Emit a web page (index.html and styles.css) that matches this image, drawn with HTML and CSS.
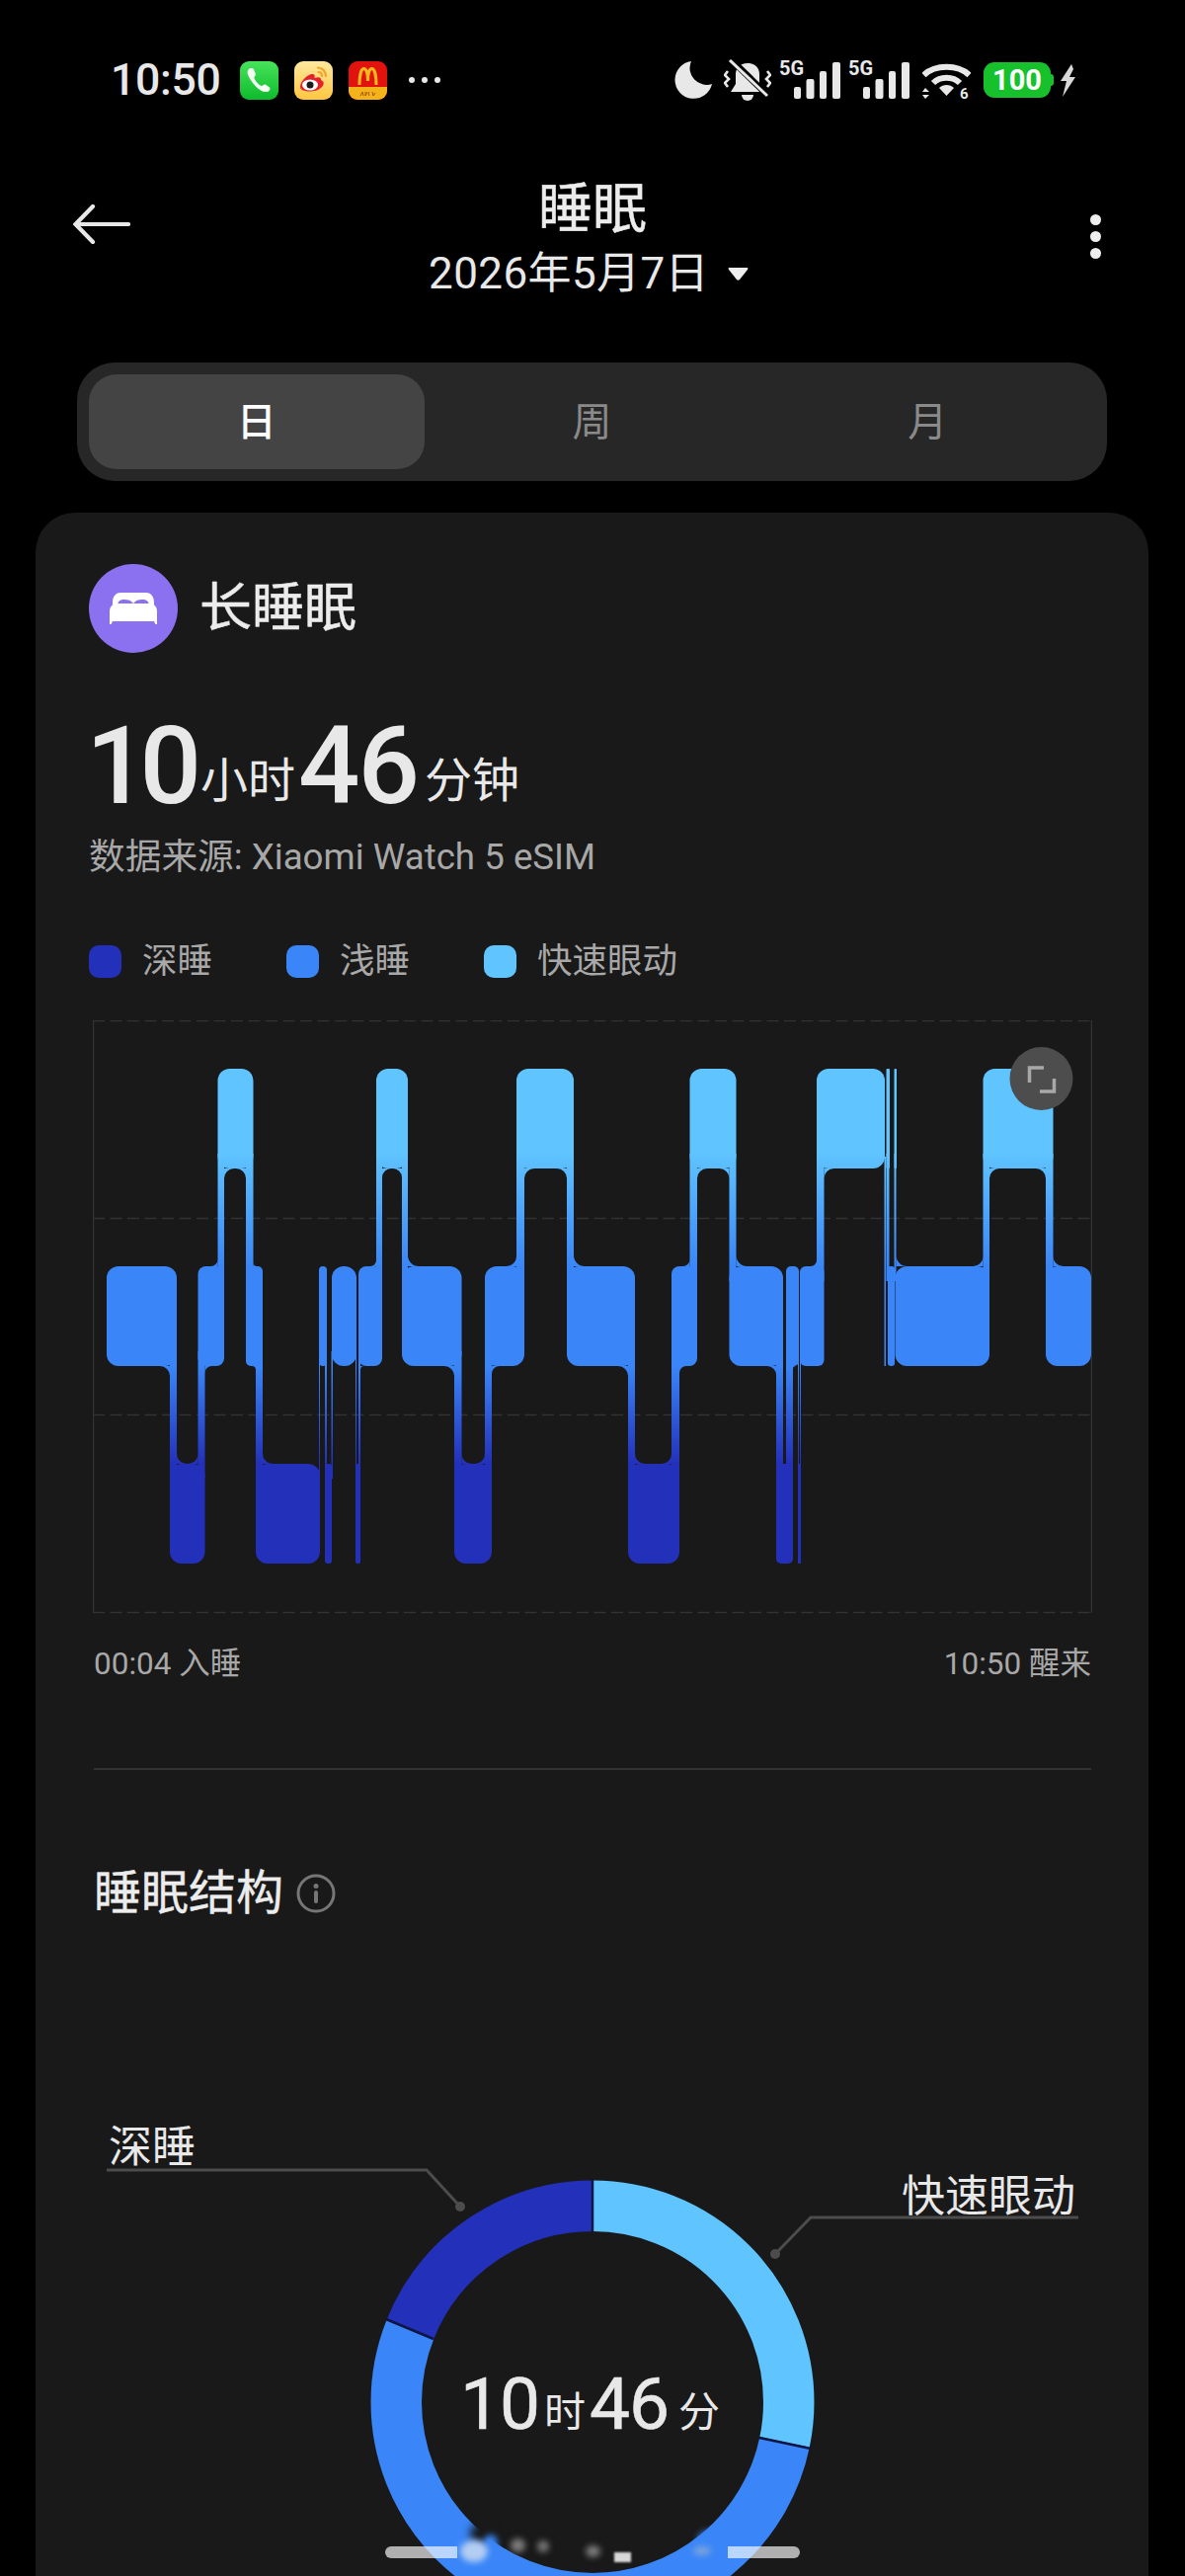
FILE: index.html
```html
<!DOCTYPE html>
<html lang="zh">
<head>
<meta charset="utf-8">
<title>睡眠</title>
<link rel="stylesheet" href="styles.css">
</head>
<body>
<div class="page">
  <div class="status">
    <div class="status-left">
      <span class="clock">10:50</span>
      <svg class="app" viewBox="0 0 39 39"><defs><linearGradient id="pg" x1="0" y1="0" x2="0" y2="1"><stop offset="0" stop-color="#47e35a"/><stop offset="1" stop-color="#0dbb2b"/></linearGradient></defs><rect width="39" height="39" rx="9" fill="url(#pg)"/><path d="M8.500 8.500c1.800-1.800 4.600-2 5.500-.2l1.700 4.200c.5 1.300-.3 2.300-1.500 3.700 1 3.600 4.500 7.500 8 9 1.400-1.300 2.600-2.200 3.900-1.500l3.600 2.500c1.500 1.100.9 3.300-.9 4.300-2.500 1.400-6.500.3-11-3.300C13 22.600 9.500 17.500 8 13.500c-.6-1.800-.5-3.900.5-5z" fill="#f4fff4"/></svg>
      <svg class="app" viewBox="0 0 39 39"><defs><linearGradient id="wg" x1="0" y1="0" x2="0" y2="1"><stop offset="0" stop-color="#ffe9a0"/><stop offset="1" stop-color="#ffc63f"/></linearGradient></defs><rect width="39" height="39" rx="9" fill="url(#wg)"/><path d="M6 26c0-6 8-13 12-13 3 0 3 2 2.500 4 4-1.500 7-.5 6.500 2 4 1.500 3 5.500 .5 7.500-3 3-8 4-12 4-5 0-9.500-1.500-9.500-4.500z" fill="#e5212c"/><ellipse cx="16" cy="24" rx="8" ry="5.500" fill="#fff"/><circle cx="16" cy="24" r="3.500" fill="#1b1b1b"/><path d="M24 6.500c4 0 8 3.500 8 8.500M24.500 11c2 0 3.500 1.500 3.500 4" fill="none" stroke="#f0a52a" stroke-width="2.200" stroke-linecap="round"/></svg>
      <svg class="app" viewBox="0 0 39 39"><rect width="39" height="39" rx="9" fill="#e2120f"/><path d="M0 26H39V30a9 9 0 0 1-9 9H9a9 9 0 0 1-9-9z" fill="#f4b31a"/><path d="M11 24C11 14 13 7.500 15.500 7.500S19.500 13 19.500 20C19.500 13 21 7.500 23.500 7.500S28 14 28 24" fill="none" stroke="#f8b81c" stroke-width="3"/><path d="M12 35l2-4 1 4M17 31v4l2-4M21 31c-1 1-1 3 0 4M24 31l1 4 2-3" fill="none" stroke="#a8550d" stroke-width="1"/></svg>
      <div class="more"><i></i><i></i><i></i></div>
    </div>
    <div class="status-right">
      <svg class="moon" viewBox="0 0 38 38"><path d="M17 0A19 19 0 1 0 38 23A17 17 0 0 1 17 0Z" fill="#e8e8e8"/></svg>
      <svg class="bell" viewBox="0 0 48 42"><path d="M24 4c-8 0-12 5-12 11v10l-5 8h34l-5-8v-10c0-6-4-11-12-11z" fill="#e8e8e8"/><path d="M18 36h12a6 6 0 0 1-12 0z" fill="#e8e8e8"/><path d="M7 0L45 37" stroke="#000" stroke-width="6.500"/><path d="M6 1L44 37" stroke="#e8e8e8" stroke-width="3"/><path d="M4 12L1 16L5 20L1 24L4 28M44 12L47 16L43 20L47 24L44 28" fill="none" stroke="#e8e8e8" stroke-width="2.600"/></svg>
      <svg class="signal" viewBox="0 -5 62 47"><text class="five-g" x="0" y="16">5G</text><rect x="15" y="28" width="7" height="12" rx="2"/><rect x="27.500" y="20" width="8" height="20" rx="2"/><rect x="41" y="12" width="7" height="28" rx="2"/><rect x="54" y="3" width="8" height="37" rx="2"/></svg>
      <svg class="signal" viewBox="0 -5 62 47"><text class="five-g" x="0" y="16">5G</text><rect x="15" y="28" width="7" height="12" rx="2"/><rect x="27.500" y="20" width="8" height="20" rx="2"/><rect x="41" y="12" width="7" height="28" rx="2"/><rect x="54" y="3" width="8" height="37" rx="2"/></svg>
      <svg class="wifi" viewBox="0 0 49 43"><path d="M1.500 13C13 2 36 2 47.500 13" fill="none" stroke="#e8e8e8" stroke-width="6"/><path d="M11 21C18 14 31 14 38 21" fill="none" stroke="#e8e8e8" stroke-width="6"/><path d="M17 26C21 22 28 22 32 26L24.500 34z" fill="#e8e8e8"/><path d="M3 26L0 30H7zM3 37L0 33H7z" fill="#e8e8e8"/><text class="wifi-six" x="38" y="37">6</text></svg>
      <div class="battery">100</div>
      <svg class="bolt" viewBox="0 0 17 33"><path d="M12 0L1 17L7 17L3 33L16 13L10 13L14 5Z" fill="#d8d8d8"/></svg>
    </div>
  </div>

  <header class="header">
    <svg class="back" viewBox="0 0 58 40"><path d="M20 2L2.500 20L20 38M3 20H56" fill="none" stroke="#e8e8e8" stroke-width="4.200" stroke-linecap="round"/></svg>
    <div class="heading">
      <h1 class="title">睡眠</h1>
      <div class="date">2026年5月7日<svg class="caret" viewBox="0 0 21 13"><path d="M1.500 0H19.500Q21 0 20 2L12 12Q10.500 13.500 9 12L1 2Q0 0 1.500 0Z" fill="#eee"/></svg></div>
    </div>
    <div class="kebab"><i></i><i></i><i></i></div>
  </header>

  <nav class="tabs">
    <div class="tab tab-active">日</div>
    <div class="tab">周</div>
    <div class="tab">月</div>
  </nav>

  <main class="card">
    <div class="card-head">
      <div class="bed-badge">
        <svg class="bed" viewBox="0 0 48 34"><path d="M3 11C3 4 7 1 11 1H37C41 1 45 4 45 11V13H40C39 9 37 8 33 8C29 8 26 9 24.500 11.500L24 12L23.500 11.500C22 9 19 8 15 8C11 8 9 9 8 13H3Z" fill="#fff"/><path d="M6 12H42C46 13 48 16 48 20V33H46.500L45 30H3L1.500 33H0V20C0 16 2 13 6 12Z" fill="#fff"/></svg>
      </div>
      <div class="card-title">长睡眠</div>
    </div>
    <div class="duration"><span class="big">10</span><span class="unit">小时</span><span class="big big-second">46</span><span class="unit">分钟</span></div>
    <div class="source">数据来源: Xiaomi Watch 5 eSIM</div>
    <div class="legend">
      <div class="legend-item legend-deep"><i></i>深睡</div>
      <div class="legend-item legend-light"><i></i>浅睡</div>
      <div class="legend-item legend-rem"><i></i>快速眼动</div>
    </div>

    <svg class="chart" viewBox="94 1032 1012 601">
      <defs>
        <linearGradient id="stage" gradientUnits="userSpaceOnUse" x1="0" y1="1081" x2="0" y2="1582">
          <stop offset="0" stop-color="#60c4ff"/>
          <stop offset="0.17" stop-color="#60c4ff"/>
          <stop offset="0.4" stop-color="#3a86f8"/>
          <stop offset="0.6" stop-color="#3a86f8"/>
          <stop offset="0.8" stop-color="#2330b9"/>
          <stop offset="1" stop-color="#2330b9"/>
        </linearGradient>
      </defs>
      <g class="grid">
        <path class="grid-dash" d="M94 1032.500H1105M94 1232.500H1105M94 1431.500H1105M94 1631.500H1105"/>
        <path class="grid-side" d="M94.500 1032V1632M1105.500 1032V1632"/>
      </g>
      <g fill="url(#stage)">
        <g>
          <rect x="108" y="1281" width="71" height="101" rx="12"/>
          <rect x="172" y="1481" width="35.500" height="101" rx="12"/>
          <rect x="200.500" y="1281" width="26.500" height="101" rx="8"/>
          <rect x="220.500" y="1081" width="36" height="101" rx="12"/>
          <rect x="249" y="1281" width="17" height="101" rx="5"/>
          <rect x="259" y="1481" width="65" height="101" rx="12"/>
          <rect x="323" y="1281" width="8" height="101" rx="4"/>
          <rect x="329" y="1481" width="7" height="101" rx="3"/>
          <rect x="336" y="1281" width="25" height="101" rx="12"/>
          <rect x="360" y="1481" width="5" height="101" rx="2"/>
          <rect x="363" y="1281" width="24" height="101" rx="8"/>
          <rect x="381" y="1081" width="32" height="101" rx="12"/>
          <rect x="407" y="1281" width="60.500" height="101" rx="12"/>
          <rect x="460" y="1481" width="38" height="101" rx="12"/>
          <rect x="491" y="1281" width="40" height="101" rx="12"/>
          <rect x="523" y="1081" width="58" height="101" rx="12"/>
          <rect x="574" y="1281" width="69" height="101" rx="12"/>
          <rect x="636" y="1481" width="52" height="101" rx="12"/>
          <rect x="680" y="1281" width="26" height="101" rx="8"/>
          <rect x="698.500" y="1081" width="47" height="101" rx="12"/>
          <rect x="738.500" y="1281" width="54.500" height="101" rx="12"/>
          <rect x="786" y="1481" width="17" height="101" rx="5"/>
          <rect x="796" y="1281" width="13" height="101" rx="5"/>
          <rect x="808" y="1481" width="3" height="101" rx="1"/>
          <rect x="810" y="1281" width="24.500" height="101" rx="6"/>
          <rect x="827" y="1081" width="69" height="101" rx="12"/>
          <rect x="895.500" y="1170" width="1.500" height="212"/>
          <rect x="897.500" y="1081" width="3.500" height="101" rx="1"/>
          <rect x="899" y="1281" width="7" height="101" rx="3"/>
          <rect x="905.500" y="1081" width="2.500" height="101" rx="1"/>
          <rect x="906.500" y="1281" width="95.500" height="101" rx="12"/>
          <rect x="995.500" y="1081" width="71" height="101" rx="12"/>
          <rect x="1059" y="1281" width="46" height="101" rx="12"/>
        </g>
        <g>
          <rect x="220.500" y="1167" width="6.500" height="129"/>
          <rect x="249" y="1167" width="7.500" height="129"/>
          <rect x="381" y="1167" width="6" height="129"/>
          <rect x="407" y="1167" width="6" height="129"/>
          <rect x="523" y="1167" width="8" height="129"/>
          <rect x="574" y="1167" width="7" height="129"/>
          <rect x="698.500" y="1167" width="7.500" height="129"/>
          <rect x="738.500" y="1167" width="7" height="129"/>
          <rect x="827" y="1167" width="7.500" height="129"/>
          <rect x="897.500" y="1167" width="3" height="129"/>
          <rect x="905.500" y="1167" width="2" height="129"/>
          <rect x="995.500" y="1167" width="6.500" height="129"/>
          <rect x="1059" y="1167" width="7.500" height="129"/>
          <rect x="172" y="1367" width="7" height="129"/>
          <rect x="200.500" y="1367" width="7" height="129"/>
          <rect x="259" y="1367" width="7" height="129"/>
          <rect x="323" y="1367" width="1" height="129"/>
          <rect x="329" y="1367" width="2" height="129"/>
          <rect x="335.500" y="1367" width="1.500" height="129"/>
          <rect x="360" y="1367" width="1" height="129"/>
          <rect x="363" y="1367" width="2" height="129"/>
          <rect x="460" y="1367" width="7.500" height="129"/>
          <rect x="491" y="1367" width="7" height="129"/>
          <rect x="636" y="1367" width="7" height="129"/>
          <rect x="680" y="1367" width="8" height="129"/>
          <rect x="786" y="1367" width="7" height="129"/>
          <rect x="796" y="1367" width="7" height="129"/>
          <rect x="808" y="1367" width="1" height="129"/>
          <rect x="810" y="1367" width="1" height="129"/>
        </g>
        <path d="M172 1382H162A10 10 0 0 1 172 1392ZM179 1481H189A10 10 0 0 1 179 1471ZM200.500 1481H190.500A10 10 0 0 0 200.500 1471ZM207.500 1382H214.500A7 7 0 0 0 207.500 1389ZM220.500 1281H213.500A7 7 0 0 0 220.500 1274ZM227 1182H237A10 10 0 0 0 227 1192ZM249 1182H239A10 10 0 0 1 249 1192ZM256.500 1281H260.500A4 4 0 0 1 256.500 1277ZM259 1382H255A4 4 0 0 1 259 1386ZM266 1481H276A10 10 0 0 1 266 1471ZM365 1382H369A4 4 0 0 0 365 1386ZM381 1281H375A6 6 0 0 0 381 1275ZM387 1182H396A9 9 0 0 0 387 1191ZM407 1182H398A9 9 0 0 1 407 1191ZM413 1281H424A11 11 0 0 1 413 1270ZM460 1382H450A10 10 0 0 1 460 1392ZM467.500 1481H477.500A10 10 0 0 1 467.500 1471ZM491 1481H481A10 10 0 0 0 491 1471ZM498 1382H506A8 8 0 0 0 498 1390ZM523 1281H513A10 10 0 0 0 523 1271ZM531 1182H541A10 10 0 0 0 531 1192ZM574 1182H564A10 10 0 0 1 574 1192ZM581 1281H592A11 11 0 0 1 581 1270ZM636 1382H626A10 10 0 0 1 636 1392ZM643 1481H653A10 10 0 0 1 643 1471ZM680 1481H670A10 10 0 0 0 680 1471ZM688 1382H695A7 7 0 0 0 688 1389ZM698.500 1281H691.500A7 7 0 0 0 698.500 1274ZM706 1182H716A10 10 0 0 0 706 1192ZM738.500 1182H728.500A10 10 0 0 1 738.500 1192ZM745.500 1281H756.500A11 11 0 0 1 745.500 1270ZM786 1382H777A9 9 0 0 1 786 1391ZM803 1382H806A3 3 0 0 0 803 1385ZM827 1281H821A6 6 0 0 0 827 1275ZM834.500 1182H844.500A10 10 0 0 0 834.500 1192ZM907.500 1281H918.500A11 11 0 0 1 907.500 1270ZM995.500 1281H985.500A10 10 0 0 0 995.500 1271ZM1002 1182H1012A10 10 0 0 0 1002 1192ZM1059 1182H1049A10 10 0 0 1 1059 1192ZM1066.500 1281H1076.500A10 10 0 0 1 1066.500 1271Z"/>
      </g>
      <circle class="expand-bg" cx="1054.500" cy="1091" r="32"/>
      <path class="expand-icon" d="M1042.500 1095V1080H1057M1067.500 1091V1104H1053"/>
    </svg>

    <div class="times"><span>00:04 入睡</span><span>10:50 醒来</span></div>
    <div class="divider"></div>
    <div class="section-title">睡眠结构<svg class="info" viewBox="0 0 40 40"><circle cx="20" cy="20" r="18" fill="none" stroke="#767676" stroke-width="3"/><circle cx="20" cy="12.500" r="2.500" fill="#767676"/><rect x="18" y="17" width="4" height="13" rx="2" fill="#767676"/></svg></div>

    <svg class="donut" viewBox="36 2140 1127 468">
      <g transform="rotate(-90 600 2431)" fill="none" stroke-width="51.500">
        <circle cx="600" cy="2431" r="198.750" pathLength="360" stroke="#60c4ff" stroke-dasharray="101.800 360"/>
        <circle cx="600" cy="2431" r="198.750" pathLength="360" stroke="#3a86f8" stroke-dasharray="190 360" stroke-dashoffset="-101.800"/>
        <circle cx="600" cy="2431" r="198.750" pathLength="360" stroke="#2330b9" stroke-dasharray="68.200 360" stroke-dashoffset="-291.800"/>
      </g>
      <path class="ring-gap" d="M600 2206V2258M769 2467L821 2478M391 2347L439 2367"/>
      <path class="leader" d="M108 2196H432L466 2233M1092 2244H821L785 2281"/>
      <circle class="leader-dot" cx="466" cy="2233" r="5"/>
      <circle class="leader-dot" cx="785" cy="2281" r="5"/>
      <text class="donut-label" x="110" y="2188">深睡</text>
      <text class="donut-label" x="913" y="2238">快速眼动</text>
      <text class="donut-num" x="466" y="2458">10</text>
      <text class="donut-unit" x="551" y="2456">时</text>
      <text class="donut-num" x="597" y="2458">46</text>
      <text class="donut-unit" x="687" y="2456">分</text>
    </svg>
  </main>

  <div class="gesture">
    <div class="gesture-bar gesture-left"></div>
    <div class="gesture-bar gesture-right"></div>
    <i class="smear smear-dark"></i>
    <i class="smear smear-blue-l"></i>
    <i class="smear smear-blue-r"></i>
    <i class="smear smear-pale"></i>
    <i class="smear smear-grey-a"></i>
    <i class="smear smear-grey-b"></i>
    <i class="smear smear-grey-c"></i>
    <i class="smear smear-white"></i>
    <i class="smear smear-grey-d"></i>
  </div>
</div>
</body>
</html>
```
FILE: styles.css
```css
* { box-sizing: border-box; }
html, body { margin: 0; padding: 0; background: #000; }
body { width: 1200px; height: 2608px; overflow: hidden; font-family: Roboto, "Noto Sans CJK SC", sans-serif; color: #e8e8e8; }
.page { position: relative; width: 1200px; height: 2608px; padding-top: 60px; overflow: hidden; }

.status { display: flex; justify-content: space-between; align-items: center; height: 42px; padding: 0 110px 0 112px; }
.status-left, .status-right { display: flex; align-items: center; }
.clock { font-size: 44.500px; font-weight: 500; line-height: 42px; letter-spacing: -.3px; width: 131px; color: #e8e8e8; }
.app { width: 39px; height: 39px; margin-right: 16px; }
.more { display: flex; gap: 7px; margin-left: 6px; }
.more i { width: 6px; height: 6px; border-radius: 50%; background: #e8e8e8; }
.moon { width: 38px; height: 38px; }
.bell { width: 48px; height: 42px; margin-left: 12px; }
.signal { width: 62px; height: 47px; margin: -5px 0 0 8px; fill: #e8e8e8; }
.five-g { font: 700 20px Roboto, sans-serif; }
.wifi { width: 49px; height: 43px; margin: 0 0 -6px 13px; }
.wifi-six { font: 700 15px Roboto, sans-serif; fill: #e8e8e8; }
.battery { position: relative; width: 68px; height: 36px; margin-left: 13px; border-radius: 11px; background: #16c12b; color: #fff; font-size: 29px; font-weight: 700; line-height: 36px; text-align: center; }
.battery::after { content: ""; position: absolute; right: -3px; top: 12px; width: 3px; height: 12px; border-radius: 0 3px 3px 0; background: #16c12b; }
.bolt { width: 17px; height: 33px; margin-left: 9px; }

.header { display: grid; grid-template-columns: 1fr auto 1fr; align-items: start; margin-top: 77px; padding: 0 74px; }
.back { width: 58px; height: 40px; margin-top: 28px; }
.heading { display: flex; flex-direction: column; align-items: center; }
.title { margin: 0; font-size: 55px; font-weight: 400; line-height: 64px; color: #ececec; -webkit-text-stroke: .5px #ececec; }
.date { display: flex; align-items: center; margin-top: 10px; padding-right: 8px; font-size: 44px; line-height: 48px; letter-spacing: .4px; color: #e8e8e8; }
.caret { width: 21px; height: 13px; margin-left: 19px; }
.kebab { justify-self: end; display: flex; flex-direction: column; gap: 6px; margin: 38px 11px 0 0; }
.kebab i { width: 11px; height: 11px; border-radius: 50%; background: #eee; }

.tabs { display: grid; grid-template-columns: repeat(3, 1fr); width: 1043px; height: 120px; margin: 66px 0 0 78px; padding: 12px; border-radius: 38px; background: #272727; }
.tab { display: flex; align-items: center; justify-content: center; padding-bottom: 6px; border-radius: 28px; font-size: 40px; color: #8a8a8a; }
.tab-active { background: #444; color: #fff; font-weight: 500; }

.card { width: 1127px; height: 2200px; margin: 32px 0 0 36px; padding-top: 52px; border-radius: 40px 40px 0 0; background: #191919; }
.card-head { display: flex; align-items: center; gap: 22px; padding-left: 54px; }
.bed-badge { display: flex; align-items: center; justify-content: center; width: 90px; height: 90px; border-radius: 50%; background: #8b71f0; }
.bed { width: 48px; height: 34px; }
.card-title { font-size: 53px; line-height: 64px; font-weight: 400; color: #ececec; -webkit-text-stroke: .5px #ececec; }

.duration { height: 110px; margin: 60px 0 0 51px; line-height: 110px; color: #e8e8e8; white-space: nowrap; }
.big { font-size: 110px; line-height: 110px; font-weight: 500; letter-spacing: -8px; margin-right: 7px; }
.big-second { letter-spacing: -2px; margin-left: 3px; margin-right: 7px; }
.unit { font-size: 48px; line-height: 60px; vertical-align: 6px; }
.source { margin: 15px 0 0 54px; font-size: 36.700px; line-height: 44px; color: #a8a8a8; }
.legend { display: flex; align-items: center; margin: 61px 0 0 54px; }
.legend-item { display: flex; align-items: center; gap: 21px; width: 200px; font-size: 35.500px; line-height: 44px; color: #a8a8a8; white-space: nowrap; }
.legend-item i { width: 33px; height: 33px; border-radius: 10px; }
.legend-deep i { background: #2330b9; }
.legend-light i { background: #3a86f8; }
.legend-rem i { background: #60c4ff; }

.chart { display: block; width: 1012px; height: 601px; margin: 37.500px 0 0 58px; }
.grid-dash { fill: none; stroke: #333; stroke-width: 1.500; stroke-dasharray: 12 5.500; }
.grid-side { fill: none; stroke: #333; stroke-width: 1.500; }
.expand-bg { fill: #4d4d4d; }
.expand-icon { fill: none; stroke: #a8a8a8; stroke-width: 3.500; }

.times { display: flex; justify-content: space-between; width: 1010px; margin: 33px 0 0 59px; font-size: 31.500px; line-height: 36px; color: #a8a8a8; }
.divider { width: 1010px; height: 2px; margin: 87.500px 0 0 59px; background: #333; }
.section-title { display: flex; align-items: center; margin: 94.500px 0 0 59px; font-size: 48px; line-height: 60px; font-weight: 400; color: #ececec; -webkit-text-stroke: .4px #ececec; }
.info { width: 40px; height: 40px; margin-left: 13px; }

.donut { display: block; width: 1127px; height: 468px; margin-top: 194px; }
.ring-gap { fill: none; stroke: #0e1542; stroke-width: 2.500; }
.leader { fill: none; stroke: #4c4c4c; stroke-width: 3; }
.leader-dot { fill: #4c4c4c; }
.donut-label { font-size: 44px; fill: #e8e8e8; }
.donut-num { font-size: 73px; font-weight: 400; letter-spacing: -1px; fill: #e8e8e8; stroke: #e8e8e8; stroke-width: .6px; }
.donut-unit { font-size: 42px; fill: #e8e8e8; }

.gesture { position: absolute; left: 0; top: 2540px; width: 1200px; height: 68px; }
.gesture-bar { position: absolute; top: 38px; height: 12px; background: rgba(255,255,255,.66); }
.gesture-left { left: 390px; width: 73px; border-radius: 6px 0 0 6px; }
.gesture-right { left: 737px; width: 73px; border-radius: 0 6px 6px 0; }
.smear { position: absolute; border-radius: 50%; filter: blur(3px); }
.smear-dark { left: 476px; top: 14px; width: 24px; height: 22px; background: #191919; filter: blur(4px); }
.smear-blue-l { left: 490px; top: 26px; width: 14px; height: 18px; background: #3a86f8; }
.smear-blue-r { left: 706px; top: 22px; width: 24px; height: 22px; background: #3a86f8; }
.smear-pale { left: 466px; top: 32px; width: 28px; height: 22px; background: #b4cdf2; }
.smear-grey-a { left: 517px; top: 30px; width: 15px; height: 14px; background: #7d7d7d; }
.smear-grey-b { left: 544px; top: 32px; width: 12px; height: 12px; background: #787878; }
.smear-grey-c { left: 593px; top: 37px; width: 15px; height: 12px; background: #7d7d7d; }
.smear-white { left: 622px; top: 44px; width: 17px; height: 10px; border-radius: 0; background: #d8d8d8; filter: blur(1px); }
.smear-grey-d { left: 702px; top: 38px; width: 18px; height: 9px; background: #7ca4dc; }
```
